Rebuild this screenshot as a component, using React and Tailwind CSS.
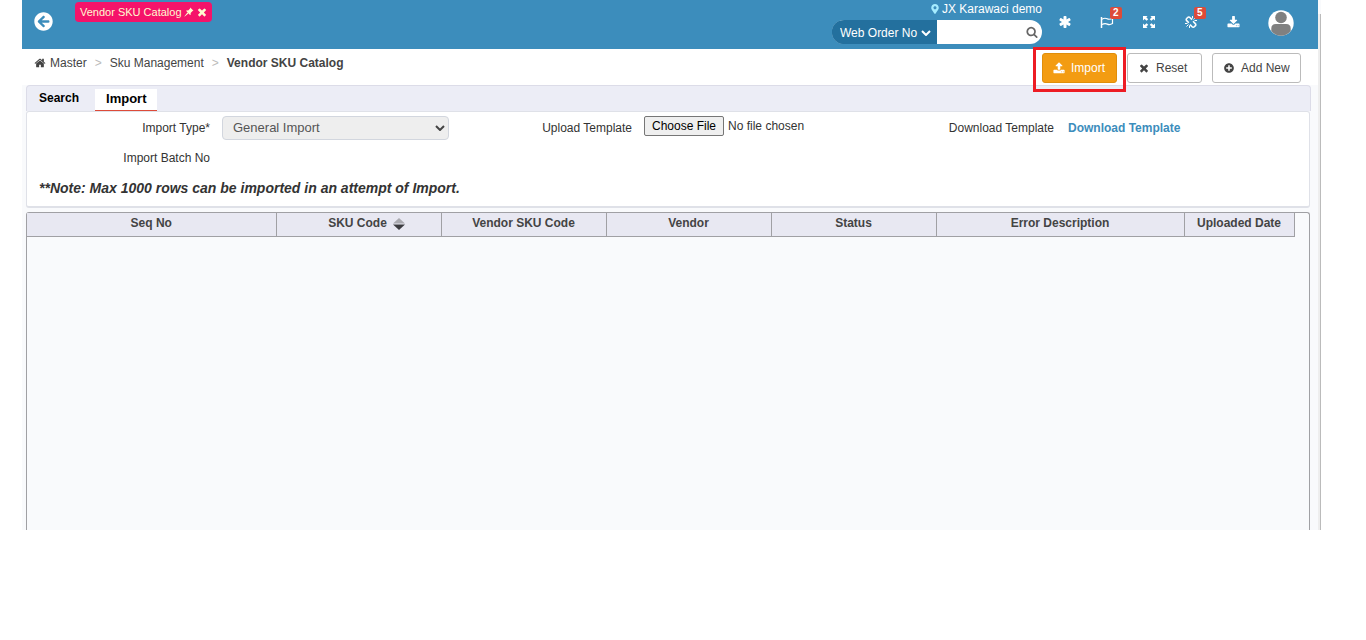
import React, { useState } from "react";
import {
  FaArrowCircleLeft,
  FaMapMarkerAlt,
  FaPlusCircle,
} from "react-icons/fa";

const columns = [
  { label: "Seq No", width: "w-[249px]" },
  { label: "SKU Code", width: "w-[165px]", sortable: true },
  { label: "Vendor SKU Code", width: "w-[165px]" },
  { label: "Vendor", width: "w-[165px]" },
  { label: "Status", width: "w-[165px]" },
  { label: "Error Description", width: "w-[248px]" },
  { label: "Uploaded Date", width: "w-[110px]" },
];

const icons = {
  asterisk:
    "M1546 1050q46 26 59.5 77.5t-12.5 97.5l-64 110q-26 46-77.5 59.5t-97.5-12.5l-266-153v307q0 52-38 90t-90 38h-128q-52 0-90-38t-38-90v-307l-266 153q-46 26-97.5 12.5t-77.5-59.5l-64-110q-26-46-12.5-97.5t59.5-77.5l266-154-266-154q-46-26-59.5-77.5t12.5-97.5l64-110q26-46 77.5-59.5t97.5 12.5l266 153v-307q0-52 38-90t90-38h128q52 0 90 38t38 90v307l266-153q46-26 97.5-12.5t77.5 59.5l64 110q26 46 12.5 97.5t-59.5 77.5l-266 154z",
  times:
    "M1490 1322q0 40-28 68l-136 136q-28 28-68 28t-68-28l-294-294-294 294q-28 28-68 28t-68-28l-136-136q-28-28-28-68t28-68l294-294-294-294q-28-28-28-68t28-68l136-136q28-28 68-28t68 28l294 294 294-294q28-28 68-28t68 28l136 136q28 28 28 68t-28 68l-294 294 294 294q28 28 28 68z",
  download:
    "M1344 1344q0-26-19-45t-45-19-45 19-19 45 19 45 45 19 45-19 19-45zm256 0q0-26-19-45t-45-19-45 19-19 45 19 45 45 19 45-19 19-45zm128-224v320q0 40-28 68t-68 28h-1472q-40 0-68-28t-28-68v-320q0-40 28-68t68-28h465l135 136q58 56 136 56t136-56l136-136h464q40 0 68 28t28 68zm-325-569q17 41-14 70l-448 448q-18 19-45 19t-45-19l-448-448q-31-29-14-70 17-39 59-39h256v-448q0-26 19-45t45-19h256q26 0 45 19t19 45v448h256q42 0 59 39z",
  upload:
    "M1344 1472q0-26-19-45t-45-19-45 19-19 45 19 45 45 19 45-19 19-45zm256 0q0-26-19-45t-45-19-45 19-19 45 19 45 45 19 45-19 19-45zm128-224v320q0 40-28 68t-68 28h-1472q-40 0-68-28t-28-68v-320q0-40 28-68t68-28h427q21 56 70.5 92t110.5 36h256q61 0 110.5-36t70.5-92h427q40 0 68 28t28 68zm-325-648q-17 40-59 40h-256v448q0 26-19 45t-45 19h-256q-26 0-45-19t-19-45v-448h-256q-42 0-59-40-17-39 14-69l448-448q18-19 45-19t45 19l448 448q31 30 14 69z",
  home: "M1472 992v480q0 26-19 45t-45 19h-384v-384h-256v384h-384q-26 0-45-19t-19-45v-480q0-1 .5-3t.5-3l575-474 575 474q1 2 1 6zm223-69l-62 74q-8 9-21 11h-3q-13 0-21-7l-692-577-692 577q-12 8-24 7-13-2-21-11l-62-74q-8-10-7-23.5t11-21.5l719-599q32-26 76-26t76 26l244 204v-195q0-14 9-23t23-9h192q14 0 23 9t9 23v408l219 182q10 8 11 21.5t-7 23.5z",
  search:
    "M1216 832q0-185-131.500-316.500t-316.500-131.500-316.500 131.500-131.500 316.500 131.500 316.500 316.500 131.500 316.500-131.500 131.500-316.500zm512 832q0 52-38 90t-90 38q-54 0-90-38l-343-342q-179 124-399 124-143 0-273.500-55.500t-225-150-150-225-55.500-273.500 55.500-273.500 150-225 225-150 273.500-55.500 273.500 55.500 225 150 150 225 55.500 273.500q0 220-124 399l343 343q37 37 37 90z",
};

const Icon = ({ name, className }) => (
  <svg
    viewBox="0 0 1792 1792"
    fill="currentColor"
    className={`shrink-0 ${className}`}
  >
    <path d={icons[name]} />
  </svg>
);

const ExpandIcon = () => (
  <svg viewBox="0 0 14 14" className="h-3.5 w-3.5" fill="currentColor">
    <path d="M1 1h4.6L4.3 2.3l1.9 1.9-1.6 1.6-2-1.9L1 5.4zM13 1v4.4l-1.6-1.5-2 1.9-1.6-1.6 1.9-1.9L8.400 1zM1 13V8.6l1.6 1.5 2-1.9 1.6 1.6-1.9 1.9L5.6 13zM13 13H8.400l1.300-1.300-1.900-1.900 1.600-1.600 2 1.900L13 8.600z" />
  </svg>
);

const FlagIcon = () => (
  <svg
    viewBox="0 0 14 14"
    className="h-3.5 w-3.5"
    fill="none"
    stroke="currentColor"
  >
    <path d="M1.500 2v11" strokeWidth="1.500" />
    <path
      d="M2 4.200c2-1.200 3.600-1.200 5.200-.4s3.200.6 5.300-.6v5.400c-2 1.200-3.600 1.300-5.200.5S4 8.400 2 9.600"
      strokeWidth="1.200"
    />
  </svg>
);

const BrokenLinkIcon = () => (
  <svg
    viewBox="0 0 14 14"
    className="h-3.5 w-3.5"
    fill="none"
    stroke="currentColor"
    strokeWidth="1.600"
  >
    <path d="M8 4.600L5.900 2.500a1.500 1.500 0 0 0-2.200 0l-1 1a1.500 1.500 0 0 0 0 2.200L4.800 7.800" />
    <path d="M9 6.300l2.300 2.300a1.500 1.500 0 0 1 0 2.200l-1 1a1.500 1.500 0 0 1-2.200 0L6 9.600" />
    <path
      d="M4.500 9.500l-2 2M5.500 10.500v2.500M1 8.500h2.500M9.500 4.500l2-2M8.500 3.500V1M13 5.500h-2.500"
      strokeWidth="1"
    />
  </svg>
);

const PinIcon = () => (
  <svg viewBox="0 0 10 10" className="h-2.5 w-2.5" fill="currentColor">
    <path d="M6.200.6L9.500 3.800l-.9.300-2 2 .2 1.300-.8.500L2.200 4l.5-.7 1.400.2 2-2zM3.400 5.600l1 1L.8 9.500H.500v-.3z" />
  </svg>
);

const Avatar = () => (
  <svg viewBox="0 0 26 26" className="h-[26px] w-[26px]">
    <circle cx="13" cy="13" r="12.7" fill="#fff" />
    <circle cx="13" cy="7.5" r="5.8" fill="#808080" />
    <path
      d="M3.3 21v-2.500Q3.300 14 7.800 14h10.400q4.500 0 4.500 4.500V21A12.600 12.600 0 0 1 13 25.700 12.600 12.600 0 0 1 3.300 21z"
      fill="#808080"
    />
  </svg>
);

const SortIcon = () => (
  <svg viewBox="0 0 12 12" className="h-3 w-3">
    <path d="M6 0l6 5.5H0z" fill="#aaaab0" />
    <path d="M0 6.5h12L6 12z" fill="#3c3c40" />
  </svg>
);

const Badge = ({ children }) => (
  <span className="absolute -top-2 left-2.5 rounded-xs bg-[#dd4b39] px-[3px] text-[10px] leading-3 font-bold text-white">
    {children}
  </span>
);

const HeaderButton = ({ label, badge, children }) => (
  <button
    type="button"
    aria-label={label}
    className="relative flex h-3.5 w-3.5 items-center justify-center"
  >
    {children}
    {badge && <Badge>{badge}</Badge>}
  </button>
);

const ActionButton = ({ icon, className, children }) => (
  <button
    type="button"
    className={`flex h-[30px] items-center gap-1.5 rounded-[3px] border pl-2.5 text-xs whitespace-nowrap ${className}`}
  >
    {icon}
    {children}
  </button>
);

const Header = () => (
  <header className="mr-[3px] flex h-[49px] justify-between bg-[#3c8dbc] text-white">
    <div className="flex items-start pl-3">
      <button type="button" aria-label="Back" className="mt-3 text-[19px]">
        <FaArrowCircleLeft />
      </button>
      <div className="mt-0.5 ml-[22px] flex h-5 items-center rounded bg-[#f5136a] pr-1 pl-[5px] text-[11px] text-[#fffbd0]">
        <a href="#vendor-sku-catalog">Vendor SKU Catalog</a>
        <button type="button" aria-label="Pin tab" className="ml-0.5">
          <PinIcon />
        </button>
        <button type="button" aria-label="Close tab" className="ml-0.5">
          <Icon name="times" className="h-3 w-3" />
        </button>
      </div>
    </div>

    <div className="flex items-start pr-6">
      <div className="w-[210px]">
        <div className="flex h-5 items-center justify-end gap-0.5 pb-0.5 text-xs">
          <FaMapMarkerAlt className="text-[10px] text-[#a5ecff]" />
          JX Karawaci demo
        </div>
        <div className="flex h-6 overflow-hidden rounded-xl bg-white">
          <div className="relative w-[105px] bg-[#23709e]">
            <select
              aria-label="Search by"
              className="h-6 w-full appearance-none bg-[#23709e] pl-2 text-xs text-white"
            >
              <option>Web Order No</option>
            </select>
            <svg
              viewBox="0 0 10 6"
              className="pointer-events-none absolute top-2.5 right-1.5 h-1.5 w-2.5"
              fill="none"
              stroke="currentColor"
              strokeWidth="2"
            >
              <path d="M1 1l4 4 4-4" />
            </svg>
          </div>
          <input
            type="text"
            aria-label="Search text"
            className="w-0 flex-1 bg-white px-2 text-xs text-[#333] outline-none"
          />
          <button
            type="button"
            aria-label="Search"
            className="pr-1 text-[#666]"
          >
            <Icon name="search" className="h-3 w-3" />
          </button>
        </div>
      </div>
      <div className="mt-[15px] ml-4 flex gap-7">
        <HeaderButton label="Favourites">
          <Icon name="asterisk" className="h-3.5 w-3.5" />
        </HeaderButton>
        <HeaderButton label="Flags" badge="2">
          <FlagIcon />
        </HeaderButton>
        <HeaderButton label="Full screen">
          <ExpandIcon />
        </HeaderButton>
        <HeaderButton label="Broken links" badge="5">
          <BrokenLinkIcon />
        </HeaderButton>
        <HeaderButton label="Downloads">
          <Icon name="download" className="h-[13px] w-[13px]" />
        </HeaderButton>
      </div>
      <button type="button" aria-label="Account" className="mt-2.5 ml-7">
        <Avatar />
      </button>
    </div>
  </header>
);

const Toolbar = () => (
  <div className="mr-[3px] flex h-9 items-start justify-between bg-white pr-[17px] pl-3">
    <nav className="flex h-7 items-center text-xs text-[#444]">
      <Icon name="home" className="mr-1 h-3 w-3" />
      <a href="#master">Master</a>
      <span className="mx-2 text-[#bbb]">&gt;</span>
      <a href="#sku-management">Sku Management</a>
      <span className="mx-2 text-[#bbb]">&gt;</span>
      <span className="font-bold">Vendor SKU Catalog</span>
    </nav>
    <div className="flex gap-2.5 pt-1">
      <div className="relative">
        <ActionButton
          icon={<Icon name="upload" className="h-3 w-3" />}
          className="w-[75px] border-[#e08e0b] bg-[#f39c12] text-white"
        >
          Import
        </ActionButton>
        {/* highlight frame around the import action */}
        <span className="pointer-events-none absolute -top-1.5 -right-[9px] -bottom-[9px] -left-[9px] border-3 border-[#ed1c24]" />
      </div>
      <ActionButton
        icon={<Icon name="times" className="h-3 w-3" />}
        className="w-[75px] border-[#bbb] bg-white text-[#444]"
      >
        Reset
      </ActionButton>
      <ActionButton
        icon={<FaPlusCircle className="h-2.5 w-3 shrink-0" />}
        className="w-[89px] border-[#bbb] bg-white text-[#444]"
      >
        Add New
      </ActionButton>
    </div>
  </div>
);

const Tabs = ({ active, onChange }) => (
  <div
    role="tablist"
    className="mr-2.5 flex h-[26px] items-end gap-1 rounded-t-sm border border-b-0 border-[#dcdce8] bg-[#ecedf6] text-black"
  >
    {["Search", "Import"].map((tab) => (
      <button
        key={tab}
        type="button"
        role="tab"
        aria-selected={active === tab}
        onClick={() => onChange(tab)}
        className={
          active === tab
            ? "h-[22px] border-b border-[#dd4b39] bg-white px-[11px] pb-0.5 text-[13px] font-bold"
            : "h-6 px-3 pb-0.5 text-xs font-bold"
        }
      >
        {tab}
      </button>
    ))}
  </div>
);

const ImportForm = () => (
  <form className="mr-[11px] rounded-[3px] border border-b-2 border-[#dfe1e8] bg-white pr-4 text-xs text-[#333]">
    <div className="grid grid-cols-3 pt-1">
      <div className="flex h-6 items-center gap-3">
        <label htmlFor="import-type" className="w-[183px] text-right">
          Import Type*
        </label>
        <div className="relative flex-1">
          <select
            id="import-type"
            disabled
            className="block h-6 w-full appearance-none rounded border border-[#d2d6de] bg-[#eee] px-2.5 text-[13px] text-[#555]"
          >
            <option>General Import</option>
          </select>
          <svg
            viewBox="0 0 10 6"
            className="pointer-events-none absolute top-[9px] right-1 h-1.5 w-2.5"
            fill="none"
            stroke="#444"
            strokeWidth="2"
          >
            <path d="M1 1l4 4 4-4" />
          </svg>
        </div>
      </div>
      <div className="flex h-6 items-center gap-3">
        <label htmlFor="upload-template" className="w-[183px] text-right">
          Upload Template
        </label>
        <input
          id="upload-template"
          type="file"
          className="mb-1 w-0 flex-1 text-xs file:mr-1 file:h-5 file:rounded-xs file:border file:border-solid file:border-[#767676] file:bg-[#efefef] file:px-[7px] file:text-xs file:text-black"
        />
      </div>
      <div className="flex h-6 items-center gap-3.5">
        <span className="w-[183px] text-right">Download Template</span>
        <a href="#download-template" className="font-bold text-[#3c8dbc]">
          Download Template
        </a>
      </div>
    </div>
    <div className="mt-1.5 flex h-6 items-center">
      <span className="w-[183px] text-right">Import Batch No</span>
    </div>
    <p className="mt-1.5 mb-1.5 pl-3 text-sm leading-6 font-bold italic">
      **Note: Max 1000 rows can be imported in an attempt of Import.
    </p>
  </form>
);

const ResultGrid = () => (
  <div className="mt-1 mr-[11px] min-h-[318px] rounded-t-[3px] border border-b-0 border-[#a0a0a4] pr-4">
    <table className="w-full table-fixed border-collapse text-xs text-[#444]">
      <thead>
        <tr className="h-[23px] bg-[#e8e8f2]">
          {columns.map((col) => (
            <th
              key={col.label}
              className={`border-r border-b border-[#a0a0a4] p-0 pb-0.5 font-bold ${col.width}`}
            >
              {col.label}
              {col.sortable && (
                <span className="ml-1.5 -mr-4 inline-block align-middle">
                  <SortIcon />
                </span>
              )}
            </th>
          ))}
        </tr>
      </thead>
      <tbody />
    </table>
  </div>
);

const App = () => {
  const [activeTab, setActiveTab] = useState("Import");

  return (
    <div className="bg-white font-['Liberation_Sans',Arial,sans-serif]">
      <div className="relative mr-[45px] ml-[22px] bg-[#f9fafc]">
        <Header />
        <Toolbar />
        <main className="pl-1">
          <Tabs active={activeTab} onChange={setActiveTab} />
          <ImportForm />
          <ResultGrid />
        </main>
        {/* window edge */}
        <div className="absolute top-3.5 right-0 bottom-0 w-[3px] border-r border-[#bbb] bg-[#eee]" />
      </div>
    </div>
  );
};

export default App;
